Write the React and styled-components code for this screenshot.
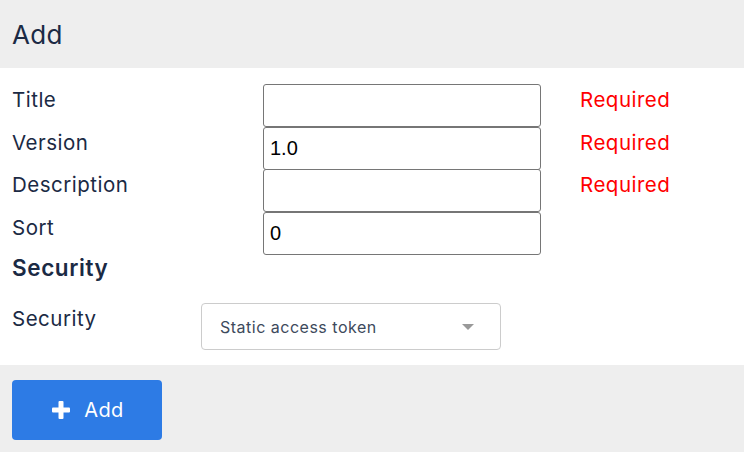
import React from 'react';
import styled, { createGlobalStyle } from 'styled-components';

const GlobalStyle = createGlobalStyle`
  html, body {
    margin: 0;
    padding: 0;
    background: #ffffff;
  }
  body {
    font-family: "Inter", "Noto Sans", sans-serif;
    color: #1b2a44;
  }
`;

const Page = styled.div`
  width: 744px;
  height: 452px;
  display: flex;
  flex-direction: column;
  overflow: hidden;
`;

const Header = styled.div`
  flex-shrink: 0;
  height: 68px;
  background: #eeeeee;
  display: flex;
  align-items: center;
  padding: 0 12px;
  box-sizing: border-box;
`;

const HeaderTitle = styled.h1`
  margin: 0;
  font-size: 26px;
  font-weight: 400;
  letter-spacing: 0.3px;
  color: #1b2a44;
`;

const Body = styled.div`
  flex-shrink: 0;
  padding: 16px 12px 15px;
  display: flex;
  flex-direction: column;
`;

const Row = styled.div`
  display: grid;
  grid-template-columns: 251px 278px auto;
  align-items: start;
`;

const Label = styled.label`
  font-size: 20.5px;
  line-height: 24px;
  letter-spacing: 0.5px;
  padding-top: 4px;
  color: #1b2a44;
`;

const TextInput = styled.input`
  box-sizing: border-box;
  width: 278px;
  height: 43px;
  margin: 0 0 -0.5px;
  border: 1px solid #767676;
  border-radius: 3px;
  padding: 0 6px;
  font-family: "Liberation Sans", Arial, sans-serif;
  font-size: 20px;
  color: #000;
  background: #fff;
  outline: none;
`;

const Error = styled.span`
  margin-left: 39px;
  font-size: 20.5px;
  line-height: 24px;
  letter-spacing: 0.5px;
  padding-top: 4px;
  color: #ff0000;
`;

const SectionTitle = styled.h2`
  margin: 0;
  font-size: 22.5px;
  line-height: 28px;
  font-weight: 600;
  letter-spacing: 0.6px;
  color: #1b2a44;
`;

const SelectRow = styled.div`
  display: grid;
  grid-template-columns: 189px 300px;
  align-items: start;
  margin-top: 21px;
`;

const Select = styled.div`
  box-sizing: border-box;
  width: 300px;
  height: 47px;
  border: 1px solid #cccccc;
  border-radius: 4px;
  display: flex;
  align-items: center;
  justify-content: space-between;
  padding: 0 26px 0 18px;
  font-size: 16px;
  letter-spacing: 0.5px;
  color: #3d4a5c;
`;

const Caret = styled.span`
  width: 0;
  height: 0;
  border-left: 6px solid transparent;
  border-right: 6px solid transparent;
  border-top: 6px solid #999999;
`;

const Footer = styled.div`
  flex: 1;
  background: #eeeeee;
  padding: 15px 12px;
`;

const Button = styled.button`
  width: 150px;
  height: 60px;
  border: none;
  border-radius: 4px;
  background: #2d7be5;
  color: #ffffff;
  font-family: "Inter", "Noto Sans", sans-serif;
  font-size: 20px;
  letter-spacing: 0.4px;
  display: flex;
  align-items: center;
  justify-content: center;
  gap: 14px;
  padding: 0 0 0 2px;
`;

const PlusIcon = () => (
  <svg width="18" height="18" viewBox="0 0 18 18" fill="#ffffff">
    <rect x="6.5" y="0" width="5" height="18" rx="1" />
    <rect x="0" y="6.5" width="18" height="5" rx="1" />
  </svg>
);

const fields = [
  { label: 'Title', value: '', required: true },
  { label: 'Version', value: '1.0', required: true },
  { label: 'Description', value: '', required: true },
  { label: 'Sort', value: '0', required: false },
];

const App = () => (
  <Page>
    <GlobalStyle />
    <Header>
      <HeaderTitle>Add</HeaderTitle>
    </Header>
    <Body>
      {fields.map((f) => (
        <Row key={f.label}>
          <Label>{f.label}</Label>
          <TextInput defaultValue={f.value} />
          {f.required ? <Error>Required</Error> : <span />}
        </Row>
      ))}
      <SectionTitle>Security</SectionTitle>
      <SelectRow>
        <Label>Security</Label>
        <Select>
          <span>Static access token</span>
          <Caret />
        </Select>
      </SelectRow>
    </Body>
    <Footer>
      <Button>
        <PlusIcon />
        Add
      </Button>
    </Footer>
  </Page>
);

export default App;
